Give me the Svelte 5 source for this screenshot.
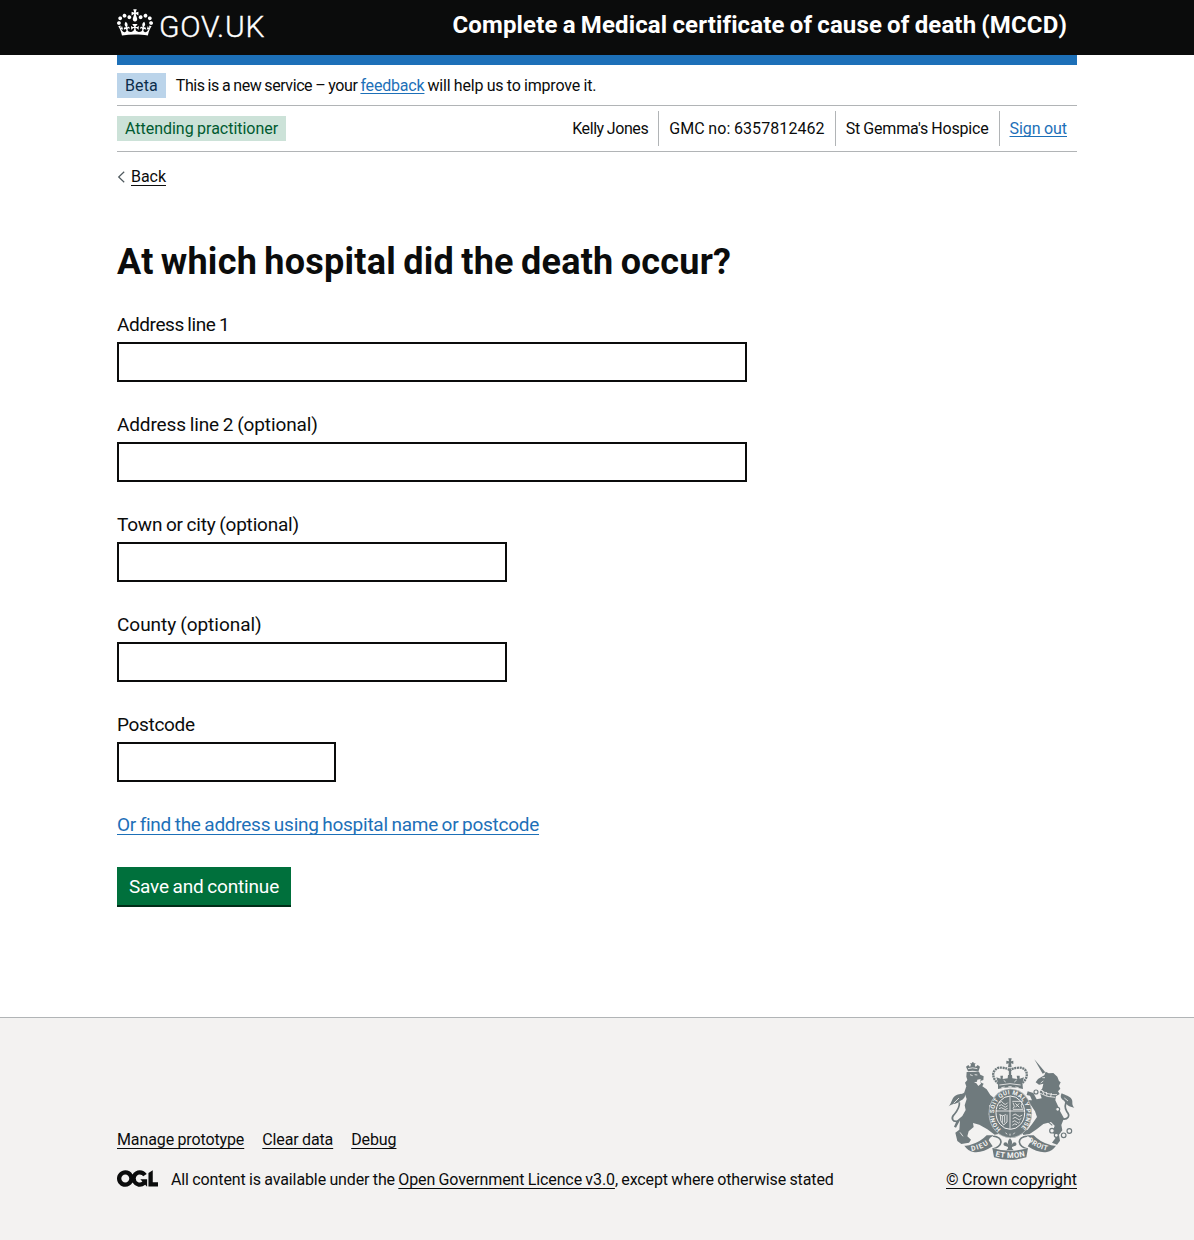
<script>
  const fields = [
    { id: 'line-1', label: 'Address line 1', size: 'wide' },
    { id: 'line-2', label: 'Address line 2 (optional)', size: 'wide' },
    { id: 'town', label: 'Town or city (optional)', size: 'medium' },
    { id: 'county', label: 'County (optional)', size: 'medium' },
    { id: 'postcode', label: 'Postcode', size: 'short' }
  ];
  const footerLinks = ['Manage prototype', 'Clear data', 'Debug'];
</script>

<header class="header">
  <div class="container header-inner">
    <a class="logo" href="#home" aria-label="GOV.UK">
      <svg class="crown" viewBox="0 0 132 97" width="36" height="27" aria-hidden="true">
        <path fill="currentColor" fill-rule="evenodd" d="M25 30.2c3.5 1.5 7.7-.2 9.1-3.7 1.5-3.6-.2-7.8-3.9-9.2-3.6-1.4-7.6.3-9.1 3.9-1.4 3.5.3 7.5 3.9 9zM9 39.5c3.6 1.5 7.8-.2 9.2-3.7 1.5-3.6-.2-7.8-3.9-9.1-3.6-1.5-7.6.2-9.1 3.8-1.4 3.5.3 7.5 3.8 9zM4.4 57.2c3.5 1.5 7.7-.2 9.1-3.8 1.5-3.6-.2-7.7-3.9-9.1-3.5-1.5-7.6.3-9.1 3.8-1.4 3.5.3 7.6 3.9 9.1zm38.3-21.4c3.5 1.5 7.7-.2 9.1-3.8 1.5-3.6-.2-7.7-3.9-9.1-3.6-1.5-7.6.3-9.1 3.8-1.3 3.6.4 7.7 3.9 9.1zm64.4-5.6c-3.6 1.5-7.8-.2-9.1-3.7-1.5-3.6.2-7.8 3.8-9.2 3.6-1.4 7.7.3 9.2 3.9 1.3 3.5-.4 7.5-3.9 9zm15.9 9.3c-3.6 1.5-7.7-.2-9.1-3.7-1.5-3.6.2-7.8 3.7-9.1 3.6-1.5 7.7.2 9.2 3.8 1.5 3.5-.3 7.5-3.8 9zm4.7 17.7c-3.6 1.5-7.8-.2-9.2-3.8-1.5-3.6.2-7.7 3.9-9.1 3.6-1.5 7.7.3 9.2 3.8 1.3 3.5-.4 7.6-3.9 9.1zM89.3 35.8c-3.6 1.5-7.8-.2-9.2-3.8-1.4-3.6.2-7.7 3.9-9.1 3.6-1.5 7.7.3 9.2 3.8 1.4 3.6-.3 7.7-3.9 9.1zM69.7 17.7l8.9 4.7V9.3l-8.9 2.8c-.2-.3-.5-.6-.9-.9L72.4 0H59.6l3.5 11.2c-.3.3-.6.5-.9.9l-8.8-2.8v13.1l8.8-4.7c.3.3.6.7.9.9l-5 15.4v.1c-.2.8-.4 1.6-.4 2.4 0 4.1 3.1 7.5 7 8.1h.2c.3 0 .7.1 1 .1.4 0 .7 0 1-.1h.2c4-.6 7.1-4.1 7.1-8.1 0-.8-.1-1.7-.4-2.4V34l-5.1-15.4c.4-.2.7-.6 1-.9zM66 92.8c16.9 0 32.8 1.1 47.1 3.2 4-16.9 8.9-26.7 14-33.5l-9.6-3.4c1 4.9 1.1 7.2 0 10.2-1.5-1.4-3-4.3-4.2-8.7L108.6 76c2.8-2 5-3.2 7.5-3.3-4.4 9.4-10 11.9-13.6 11.2-4.3-.8-6.3-4.6-5.6-7.9 1-4.7 5.7-5.9 8-.5 4.3-8.7-3-11.4-7.6-8.8 7.1-7.2 7.9-13.5 2.1-21.1-8 6.1-8.1 12.3-4.5 20.8-4.7-5.4-12.1-2.5-9.5 6.2 3.4-5.2 7.9-2 7.2 3.1-.6 4.3-6.4 7.8-13.5 7.2-10.3-.9-10.9-8-11.2-13.8 2.5-.5 7.1 1.8 11 7.3L80.2 60c-4.1 4.4-8 5.3-12.3 5.4 1.4-4.4 8-11.6 8-11.6H55.5s6.4 7.2 7.9 11.6c-4.2-.1-8-1-12.3-5.4l1.4 16.4c3.9-5.5 8.5-7.7 10.9-7.3-.3 5.8-.9 12.8-11.1 13.8-7.2.6-12.9-2.9-13.5-7.2-.7-5 3.8-8.3 7.1-3.1 2.7-8.7-4.6-11.6-9.4-6.2 3.7-8.5 3.6-14.7-4.6-20.8-5.8 7.6-5 13.9 2.2 21.1-4.7-2.6-11.9.1-7.7 8.8 2.3-5.5 7.1-4.2 8.1.5.7 3.3-1.3 7.1-5.7 7.9-3.5.7-9-1.8-13.5-11.2 2.5.1 4.7 1.3 7.5 3.3l-4.7-15.4c-1.2 4.4-2.7 7.2-4.3 8.7-1.1-3-.9-5.3 0-10.2l-9.5 3.4c5 6.9 9.9 16.7 14 33.5 14.8-2.1 30.8-3.2 47.7-3.2z" />
      </svg>
      <span class="wordmark">GOV.UK</span>
    </a>
    <span class="service">Complete a Medical certificate of cause of death (MCCD)</span>
  </div>
</header>

<div class="container">
  <div class="bar"></div>
  <div class="phase">
    <strong class="tag blue">Beta</strong>
    <p class="phase-text"><span class="lead">This is a new service – your</span><a class="feedback" href="#feedback">feedback</a><span class="rest">will help us to improve it.</span></p>
  </div>
  <div class="user">
    <strong class="tag green">Attending practitioner</strong>
    <ul class="details">
      <li class="name">Kelly Jones</li>
      <li class="number">GMC no: 6357812462</li>
      <li class="place">St Gemma's Hospice</li>
      <li><a class="sign-out" href="#sign-out">Sign out</a></li>
    </ul>
  </div>
  <a class="back" href="#back">
    <svg width="8" height="12" viewBox="0 0 8 12" aria-hidden="true"><path d="M7.2.8 1.7 6 7.2 11.2" fill="none" stroke="#505a5f" stroke-width="1.2" /></svg>
    <span>Back</span>
  </a>

  <main>
    <h1>At which hospital did the death occur?</h1>
    {#each fields as field}
      <div class="field">
        <label class={field.id} for={field.id}>{field.label}</label>
        <input id={field.id} class={field.size} type="text" />
      </div>
    {/each}
    <p class="find"><a href="#find">Or find the address using hospital name or postcode</a></p>
    <button type="button">Save and continue</button>
  </main>
</div>

<footer>
  <div class="container footer-inner">
    <div>
      <ul class="footer-links">
        {#each footerLinks as link}
          <li><a href="#footer">{link}</a></li>
        {/each}
      </ul>
      <div class="licence">
        <svg viewBox="0 0 483.2 195.7" width="41" height="17" aria-hidden="true">
          <path fill="currentColor" d="M421.5 142.8V.1l-50.7 32.3v161.1h112.4v-50.7zm-122.3-9.6A47.12 47.12 0 0 1 221 97.8c0-26 21.1-47.1 47.1-47.1 16.7 0 31.4 8.7 39.7 21.8l42.7-27.2A97.63 97.63 0 0 0 268.1 0c-36.5 0-68.3 20.1-85.1 49.7A98 98 0 0 0 97.8 0C43.9 0 0 43.9 0 97.8s43.9 97.8 97.8 97.8c36.5 0 68.3-20.1 85.1-49.7a97.76 97.76 0 0 0 149.6 25.4l19.4 22.2h3v-87.8h-80l24.3 27.5zM97.8 145c-26 0-47.1-21.1-47.1-47.1s21.1-47.1 47.1-47.1 47.1 21.1 47.1 47.1S123.8 145 97.8 145" />
        </svg>
        <span>All content is available under the <a href="#licence">Open Government Licence v3.0</a>, except where otherwise stated</span>
      </div>
    </div>
    <a class="copyright" href="#copyright">
      <svg class="arms" viewBox="24 21 381 309" width="127" height="103" aria-hidden="true">
        <defs>
          <path id="garter" d="M183 237A49 57 0 1 1 239 237" />
          <path id="dieu" d="M94 303Q131 298 155 274" />
          <path id="motto" d="M166 319Q210 330 258 318" />
          <path id="droit" d="M263 272Q289 297 331 304" />
        </defs>
        <!-- lion with its crown -->
        <g class="ink">
          <path d="M84 64 78 50l7-5 5 6 3-7-3-4h6v-3h5v3h6l-3 5 3 6 6-6 7 5-5 15Q98 60 84 64Z" />
          <path d="M80 66 117 65 121 74 131 79 130 90 121 93 124 98 131 101 127 109 140 118 151 135 163 145 155 152 160 157 147 167 153 180 146 191 150 211 164 229 179 239 190 238 187 250 164 254 142 238 118 224 99 219 101 231 86 244 82 259 93 269 87 278 64 282 52 273 46 248 58 239 60 211 48 233 42 230 50 212 67 198 77 180 74 166 80 147 73 127 79 109 75 98 82 90 79 80Z" />
        </g>
        <path class="line" stroke-width="5" d="M57 213C35 218 33 203 42 194 53 181 60 171 58 157" />
        <path class="ink" d="M26 169C36 160 34 142 50 135 62 130 66 135 74 126 79 142 70 148 60 153 52 164 40 158 26 169Z" />
        <path class="gap" d="M112 89l10-2-1 6 2 8-8 7-6-8-7-3 9-2Z" />
        <path class="cut" d="M41 160 57 144M90 74l8 3M104 74l8 1M84 56q14-5 28 0M60 247l9 12" />

        <!-- unicorn with collar and chain -->
        <g class="ink">
          <path d="M283 28 316 67 308 71Z" />
          <path d="M313 76 317 65 326 70 340 69 352 80 357 93 362 97 357 108 361 116 354 124 359 132 348 139 346 151 354 168 361 185 372 205 364 225 367 241 357 254 360 272 351 284 336 278 347 263 338 245 344 227 333 216 310 222 291 237 269 252 250 255 246 245 263 239 278 220 291 201 285 184 273 166 259 158 258 150 276 151 270 137 260 135 263 124 280 129 290 148 305 145 299 126 307 115 310 101 297 104 287 97 294 87Z" />
        </g>
        <path class="line" stroke-width="5" d="M363 206C385 211 392 197 380 184 372 171 376 160 382 151" />
        <path class="ink" d="M403 173C387 170 379 165 373 153 366 148 358 143 365 130 376 136 390 138 395 148 400 157 393 163 403 173Z" />
        <path class="cut" d="M307 83h8M302 99l8-6M302 120q20 15 49 14M299 129q22 14 47 13M307 121l5 13M319 126l2 12M334 129l-2 12M373 144l11 9" />
        <g class="ring">
          <circle cx="288" cy="126" r="6" /><circle cx="353" cy="178" r="6" /><circle cx="336" cy="242" r="7" /><circle cx="349" cy="256" r="6" />
          <circle cx="371" cy="256" r="7" /><circle cx="388" cy="243" r="7" /><path d="M337 226l-17-14" />
        </g>

        <!-- central crown -->
        <g>
          <path class="ink" d="M205 25h10l-2 9 7-2v10l-7-2 2 12h-11l2-12-7 2V32l8 2Z" />
          <path class="line beads" d="M176 101C145 77 164 50 184 53q20 1 26 9 6-8 26-9c22-3 38 25 8 48" />
          <path class="line" stroke-width="7" d="M210 55v31" />
          <path class="ink" d="M174 99 169 82l13 4-1-9h8l-1 10 15-2 1-10h12l1 10 15 2-2-10h9v9l13-4-5 17 2 18q-38-10-75 0Z" />
          <path class="cut" d="M178 105q32-8 64 0M184 113l10-2M205 110h10M226 111l10 2M191 91l6 5M223 96l7-6" />
        </g>

        <!-- garter and quartered shield -->
        <ellipse class="ink" cx="211" cy="190" rx="65" ry="74" />
        <ellipse class="edge" cx="211" cy="190" rx="64" ry="73" />
        <ellipse class="edge thick" cx="211" cy="188" rx="43" ry="50" />
        <path class="cut" stroke-width="4" d="M210 139v98M168 183h86" />
        <path class="cut" d="M177 159q8-9 13 0t13-1M177 168q8-8 13 0t13-1M177 176q8-6 13 0t13-1M217 154h31M219 178h31M219 158q8 12 0 18M247 158q-7 10 0 18M226 160l12 12m0-12-12 12M178 194q10 7 20 0M181 194l1 18 9 13 10-9V194M187 198v20M194 198v20M218 196q8-8 14 0t15-1M218 206q8-8 14 0t12-1M217 216q8-8 13 0t10-1M217 226q8-8 14-2" />
        <path class="cut" d="M197 248l4 5M210 251v6M224 248l-4 5" />
        <text class="ring-text"><textPath href="#garter" textLength="266">HONI SOIT QUI MAL Y PENSE</textPath></text>

        <!-- motto ribbons -->
        <path class="line" stroke-width="5" d="M158 258Q183 261 183 276 181 291 158 297M263 258Q238 261 238 276 240 291 263 297" />
        <path class="ribbon" d="M73 287Q87 288 96 283 122 275 140 256L161 256Q150 262 146 271L158 289Q126 310 100 306 84 303 73 287ZM348 287Q334 288 325 283 299 275 281 256L260 256Q271 262 275 271L263 289Q295 310 321 306 337 303 348 287ZM157 294Q210 311 264 294L259 322Q210 337 162 322Z" />
        <path class="ink" d="M210 265q9 9 5 19 5-10 13-6 5 8-6 11l-6 2v4l5 6h-22l5-6v-4l-6-2q-11-3-6-11 8-4 13 6-4-10 5-19Z" />
        <text class="motto"><textPath href="#dieu" textLength="56">DIEU</textPath></text>
        <text class="motto large"><textPath href="#motto" textLength="90">ET MON</textPath></text>
        <text class="motto"><textPath href="#droit" textLength="66">DROIT</textPath></text>
      </svg>
      <span>© Crown copyright</span>
    </a>
  </div>
</footer>

<style>
  :global(body) {
    background: #fff;
    color: #0b0c0c;
    font: 16px/20px Roboto, 'Liberation Sans', sans-serif;
    letter-spacing: -0.11px;
    word-spacing: -0.5px;
  }
  p, ul, h1 { margin: 0; padding: 0; }
  ul { list-style: none; }
  svg { display: block; flex: none; }
  a {
    color: #1d70b8;
    text-decoration: underline;
    text-decoration-thickness: 1px;
    text-underline-offset: 2.5px;
    text-decoration-skip-ink: none;
  }
  .container { width: 960px; margin: 0 auto; }

  .header { height: 55px; background: #0b0c0c; color: #fff; }
  .header-inner { display: flex; justify-content: space-between; }
  .logo { display: flex; gap: 6px; padding-top: 9px; color: #fff; text-decoration: none; }
  .wordmark { font-size: 30px; line-height: 35px; font-weight: 300; letter-spacing: 0.75px; -webkit-text-stroke: 0.35px #fff; }
  .service { padding: 10px 10px 0 0; font-size: 24px; line-height: 30px; font-weight: 700; letter-spacing: 0.14px; word-spacing: -1px; }

  .bar { height: 10px; background: #1d70b8; }
  .phase { display: flex; gap: 10px; height: 32px; padding-top: 8px; border-bottom: 1px solid #b1b4b6; }
  .phase-text { display: flex; gap: 3px; padding-top: 3px; }
  .lead { letter-spacing: -0.43px; word-spacing: -0.5px; }
  .feedback { letter-spacing: -0.19px; }
  .feedback, .sign-out { text-underline-offset: 1.5px; }
  .rest { letter-spacing: -0.16px; }
  .tag { height: 20px; padding: 3px 8px 2px; font-weight: 400; letter-spacing: -0.02px; }
  .blue { background: #bbd4ea; color: #0c2d4a; letter-spacing: 0.1px; }
  .green { background: #cce2d8; color: #005a30; }
  .user { display: flex; align-items: center; justify-content: space-between; height: 45px; border-bottom: 1px solid #b1b4b6; }
  .details { display: flex; }
  .details li { height: 27px; padding: 8px 10px 0; border-right: 1px solid #b1b4b6; }
  .details li:last-child { border: 0; letter-spacing: -0.05px; }
  .details .name { letter-spacing: -0.42px; }
  .number { letter-spacing: 0.08px; }
  .details .place { letter-spacing: -0.19px; }
  .back { display: inline-flex; align-items: center; gap: 6px; margin-top: 15px; color: #0b0c0c; text-decoration: none; letter-spacing: -0.05px; }
  .back span { text-decoration: underline; text-decoration-thickness: 1px; text-underline-offset: 2.5px; }

  main { padding: 54px 0 110px; font-size: 19px; line-height: 25px; letter-spacing: -0.15px; word-spacing: -0.8px; }
  h1 { margin-bottom: 30px; font-size: 36px; line-height: 40px; font-weight: 700; letter-spacing: 0.25px; word-spacing: -2px; }
  .field { display: flex; flex-direction: column; gap: 5px; margin-bottom: 30px; }
  .line-1 { letter-spacing: -0.42px; }
  .county { letter-spacing: -0.02px; }
  .town { letter-spacing: -0.2px; }
  .line-2 { letter-spacing: -0.12px; }
  .postcode { letter-spacing: -0.33px; }
  input { box-sizing: border-box; height: 40px; padding: 5px; border: 2px solid #0b0c0c; border-radius: 0; font: inherit; }
  .wide { width: 630px; }
  .medium { width: 390px; }
  .short { width: 219px; }
  .find { margin-bottom: 30px; letter-spacing: -0.26px; }
  button {
    display: block;
    width: 174px;
    height: 38px;
    padding: 1px 0 0;
    border: 0;
    background: #00703c;
    box-shadow: 0 2px 0 #002d18;
    color: #fff;
    font: inherit;
    letter-spacing: -0.18px;
    word-spacing: -0.8px;
    margin-bottom: 2px;
  }

  footer { padding: 39px 0 50px; border-top: 1px solid #b1b4b6; background: #f3f2f1; }
  footer a { color: #0b0c0c; }
  .footer-inner { display: flex; justify-content: space-between; align-items: flex-end; }
  .footer-links { display: flex; gap: 18px; margin-bottom: 20px; }
  .licence { display: flex; gap: 13px; }
  .copyright { display: flex; flex-direction: column; align-items: center; gap: 10px; letter-spacing: -0.03px; }

  .ink { fill: #6f7a7d; }
  .gap { fill: #f3f2f1; }
  .line { fill: none; stroke: #6f7a7d; }
  .ribbon { fill: #6f7a7d; stroke: #f3f2f1; stroke-width: 2; paint-order: stroke; }
  .beads { stroke-width: 7; stroke-dasharray: 6 2; }
  .cut, .edge { fill: none; stroke: #f3f2f1; stroke-width: 2.5; }
  .edge { stroke-width: 1.5; }
  .thick { stroke-width: 3; }
  .ring { fill: #f3f2f1; stroke: #6f7a7d; stroke-width: 3.5; }
  .ring-text, .motto { fill: #f3f2f1; font-size: 21px; font-weight: 700; letter-spacing: 0; word-spacing: 0; }
  .ring-text { font-size: 18px; }
  .large { font-size: 23px; }
</style>
